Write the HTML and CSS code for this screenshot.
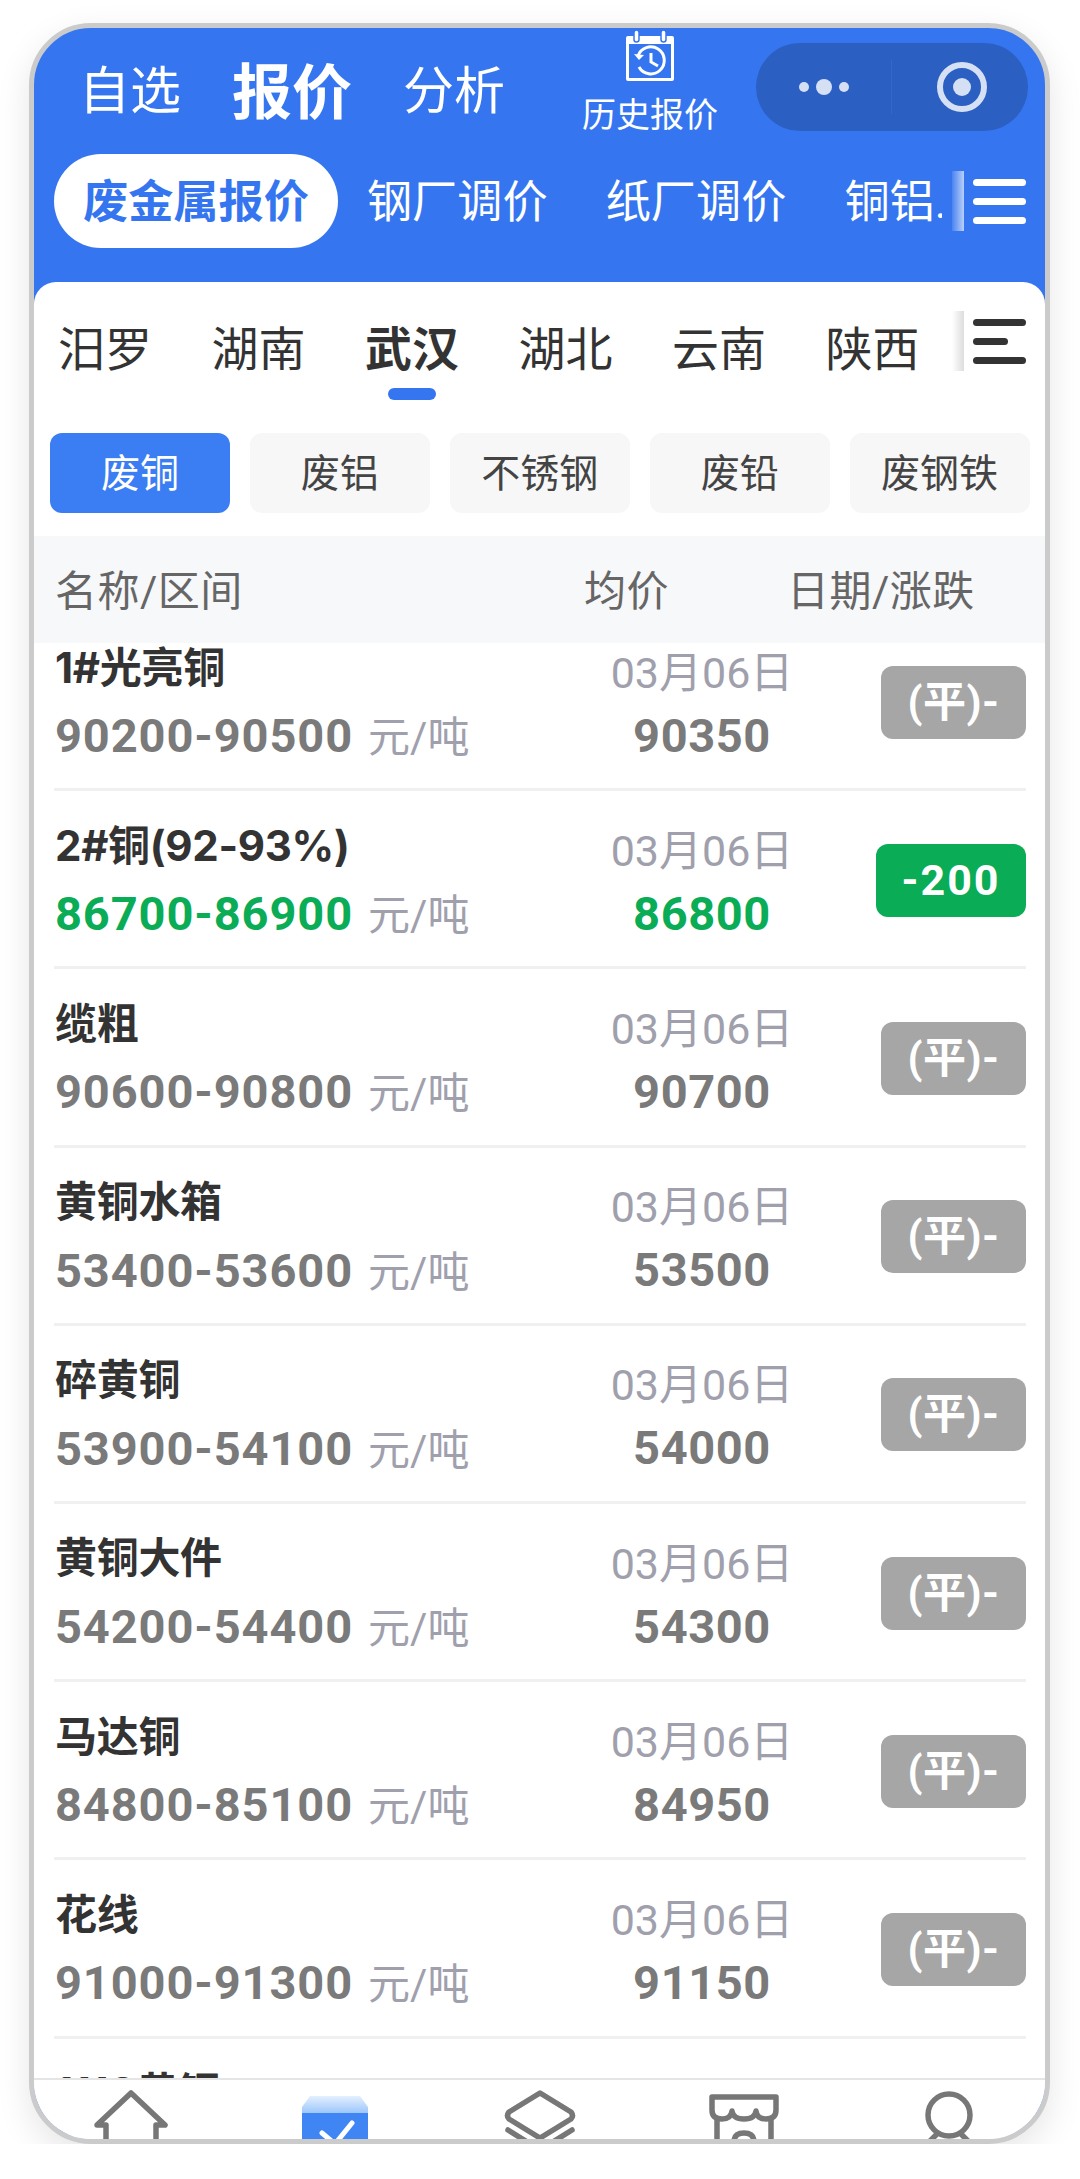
FILE: index.html
```html
<!DOCTYPE html>
<html lang="zh-CN">
<head>
  <meta charset="UTF-8" />
  <meta name="viewport" content="width=device-width, initial-scale=1.0" />
  <title>废金属报价</title>
  <link rel="stylesheet" href="styles.css">
</head>
<body>
  <div class="phone">
    <header class="top">
      <div class="nav">
        <span class="nav-item">自选</span>
        <span class="nav-item nav-active">报价</span>
        <span class="nav-item">分析</span>
        <div class="history">
          <svg class="history-icon" viewBox="0 0 50 52" width="50" height="52">
            <rect x="1" y="6" width="48" height="45" rx="2" fill="#fff"/>
            <rect x="4" y="14" width="42" height="34" fill="#3576f0"/>
            <rect x="9" y="0" width="5" height="12" rx="2.5" fill="#fff" stroke="#3576f0" stroke-width="1.5"/>
            <rect x="36" y="0" width="5" height="12" rx="2.5" fill="#fff" stroke="#3576f0" stroke-width="1.5"/>
            <path d="M13 26a13.5 13.5 0 1 1 1 11" fill="none" stroke="#fff" stroke-width="3"/>
            <path d="M9 24l5 6 5-5" fill="#fff"/>
            <path d="M26 23v9l7 4" fill="none" stroke="#fff" stroke-width="3"/>
          </svg>
          <span class="history-label">历史报价</span>
        </div>
        <div class="capsule">
          <div class="capsule-dots"><i></i><i class="big"></i><i></i></div>
          <div class="capsule-target"><i></i></div>
        </div>
      </div>
      <div class="tabs">
        <div class="tabs-scroll">
          <span class="tab tab-active">废金属报价</span>
          <span class="tab">钢厂调价</span>
          <span class="tab">纸厂调价</span>
          <span class="tab">铜铝...</span>
        </div>
        <span class="fade fade-blue"></span>
        <div class="burger burger-white"><i></i><i></i><i></i></div>
      </div>
    </header>

    <main class="sheet">
      <div class="cities">
        <div class="cities-list">
          <span class="city">汨罗</span>
          <span class="city">湖南</span>
          <span class="city city-active">武汉</span>
          <span class="city">湖北</span>
          <span class="city">云南</span>
          <span class="city">陕西</span>
        </div>
        <span class="fade fade-grey"></span>
        <div class="burger burger-dark"><i></i><i class="short"></i><i></i></div>
      </div>

      <div class="chips">
        <span class="chip chip-active">废铜</span>
        <span class="chip">废铝</span>
        <span class="chip">不锈钢</span>
        <span class="chip">废铅</span>
        <span class="chip">废钢铁</span>
      </div>

      <div class="thead">
        <span class="th-name">名称/区间</span>
        <span class="th-avg">均价</span>
        <span>日期/涨跌</span>
      </div>

      <div class="list">
        <div class="rows">
          <div class="row">
            <div class="info"><div class="name">1#光亮铜</div><div class="range"><b>90200-90500</b> <span class="unit">元/吨</span></div></div>
            <div class="mid"><div class="date">03月06日</div><b class="avg">90350</b></div>
            <div class="change"><span class="badge">(平)-</span></div>
          </div>
          <div class="row down">
            <div class="info"><div class="name">2#铜(92-93%)</div><div class="range"><b>86700-86900</b> <span class="unit">元/吨</span></div></div>
            <div class="mid"><div class="date">03月06日</div><b class="avg">86800</b></div>
            <div class="change"><span class="badge">-200</span></div>
          </div>
          <div class="row">
            <div class="info"><div class="name">缆粗</div><div class="range"><b>90600-90800</b> <span class="unit">元/吨</span></div></div>
            <div class="mid"><div class="date">03月06日</div><b class="avg">90700</b></div>
            <div class="change"><span class="badge">(平)-</span></div>
          </div>
          <div class="row">
            <div class="info"><div class="name">黄铜水箱</div><div class="range"><b>53400-53600</b> <span class="unit">元/吨</span></div></div>
            <div class="mid"><div class="date">03月06日</div><b class="avg">53500</b></div>
            <div class="change"><span class="badge">(平)-</span></div>
          </div>
          <div class="row">
            <div class="info"><div class="name">碎黄铜</div><div class="range"><b>53900-54100</b> <span class="unit">元/吨</span></div></div>
            <div class="mid"><div class="date">03月06日</div><b class="avg">54000</b></div>
            <div class="change"><span class="badge">(平)-</span></div>
          </div>
          <div class="row">
            <div class="info"><div class="name">黄铜大件</div><div class="range"><b>54200-54400</b> <span class="unit">元/吨</span></div></div>
            <div class="mid"><div class="date">03月06日</div><b class="avg">54300</b></div>
            <div class="change"><span class="badge">(平)-</span></div>
          </div>
          <div class="row">
            <div class="info"><div class="name">马达铜</div><div class="range"><b>84800-85100</b> <span class="unit">元/吨</span></div></div>
            <div class="mid"><div class="date">03月06日</div><b class="avg">84950</b></div>
            <div class="change"><span class="badge">(平)-</span></div>
          </div>
          <div class="row">
            <div class="info"><div class="name">花线</div><div class="range"><b>91000-91300</b> <span class="unit">元/吨</span></div></div>
            <div class="mid"><div class="date">03月06日</div><b class="avg">91150</b></div>
            <div class="change"><span class="badge">(平)-</span></div>
          </div>
          <div class="row">
            <div class="info"><div class="name">1110黄铜</div></div>
          </div>
        </div>
      </div>

      <nav class="tabbar">
        <div class="tabbar-item">
          <svg viewBox="0 0 80 70" width="80" height="70" fill="none" stroke="#777" stroke-width="5.5" stroke-linejoin="round" stroke-linecap="round">
            <path d="M15 70V35H6L40 3L74 35H65V70"/>
          </svg>
        </div>
        <div class="tabbar-item">
          <svg viewBox="0 0 80 70" width="80" height="70">
            <defs>
              <linearGradient id="boxLid" x1="0" y1="0" x2="0" y2="1">
                <stop offset="0" stop-color="#e3f0fe"/>
                <stop offset="1" stop-color="#9cc6fb"/>
              </linearGradient>
            </defs>
            <path d="M15 6H65L73 17V23H7V17Z" fill="url(#boxLid)"/>
            <rect x="7" y="23" width="66" height="47" fill="#3f86f4"/>
            <path d="M27 43L40 54L57 33" fill="none" stroke="#fff" stroke-width="5" stroke-linecap="round"/>
          </svg>
        </div>
        <div class="tabbar-item">
          <svg viewBox="0 0 80 70" width="80" height="70" fill="none" stroke="#777" stroke-width="5.5" stroke-linejoin="round" stroke-linecap="round">
            <path d="M40 3L71 22Q74 26 71 29L40 48L9 29Q6 26 9 22Z"/>
            <path d="M8 40L40 60L72 40"/>
          </svg>
        </div>
        <div class="tabbar-item">
          <svg viewBox="0 0 80 70" width="80" height="70" fill="none" stroke="#777" stroke-width="5.5" stroke-linejoin="round">
            <path d="M8 7H72V20Q72 29 62 29Q53 29 52 21Q51 29 40 29Q29 29 28 21Q27 29 18 29Q8 29 8 20Z"/>
            <path d="M13 29V70M67 29V70"/>
            <path d="M30 52Q30 43 40 43Q50 43 50 52V70H30Z"/>
          </svg>
        </div>
        <div class="tabbar-item">
          <svg viewBox="0 0 80 70" width="80" height="70" fill="none" stroke="#777" stroke-width="5.5" stroke-linejoin="round">
            <circle cx="40" cy="25" r="21"/>
            <path d="M29 43L10 62M51 43L70 62"/>
          </svg>
        </div>
      </nav>
    </main>
  </div>
</body>
</html>
```

FILE: styles.css
```css
* {
  box-sizing: border-box;
}

body {
  margin: 0;
  background-color: #ffffff;
  font-family: Roboto, "Noto Sans CJK SC", sans-serif;
  color: #333333;
}

.phone {
  display: flex;
  flex-direction: column;
  width: 1021px;
  height: 2121px;
  margin: 23px 0 0 29px;
  border: 5px solid #cbcbcb;
  border-radius: 62px;
  overflow: hidden;
  background-color: #3576f0;
  box-shadow: 0 12px 34px rgba(0, 0, 0, 0.1);
}

/* blue header */
.top {
  flex: none;
  height: 254px;
}

.nav {
  display: flex;
  align-items: center;
  height: 118px;
  padding-left: 45px;
  color: #ffffff;
}

.nav-item {
  font-size: 51px;
  margin-right: 51px;
  white-space: nowrap;
}

.nav-active {
  font-size: 60px;
  font-weight: bold;
}

.history {
  display: flex;
  flex-direction: column;
  align-items: center;
  flex: none;
  width: 136px;
  margin: 0 0 6px 26px;
}

.history-icon {
  display: block;
  margin-bottom: 9px;
}

.history-label {
  font-size: 34px;
  line-height: 48px;
  white-space: nowrap;
}

.capsule {
  display: flex;
  align-items: center;
  flex: none;
  width: 272px;
  height: 88px;
  margin-left: 38px;
  border-radius: 44px;
  background-color: #2c5fc2;
}

.capsule-dots {
  display: flex;
  align-items: center;
  justify-content: center;
  gap: 7px;
  width: 136px;
  height: 54px;
  border-right: 1px solid #3668c9;
}

.capsule-dots i {
  width: 10px;
  height: 10px;
  border-radius: 50%;
  background-color: #d5e0f5;
}

.capsule-dots i.big {
  width: 16px;
  height: 16px;
}

.capsule-target {
  display: flex;
  align-items: center;
  justify-content: center;
  width: 50px;
  height: 50px;
  margin-left: 45px;
  border: 6px solid #d5e0f5;
  border-radius: 50%;
}

.capsule-target i {
  width: 18px;
  height: 18px;
  border-radius: 50%;
  background-color: #d5e0f5;
}

.tabs {
  display: flex;
  align-items: center;
  height: 94px;
  margin-top: 8px;
  padding-left: 20px;
  color: #ffffff;
}

.tabs-scroll {
  display: flex;
  align-items: center;
  width: 888px;
  height: 94px;
  overflow: hidden;
}

.tab {
  flex: none;
  height: 94px;
  padding: 0 29px;
  font-size: 45.2px;
  line-height: 97px;
  white-space: nowrap;
}

.tab-active {
  border-radius: 47px;
  background-color: #ffffff;
  color: #3576f0;
  font-weight: bold;
}

.fade {
  flex: none;
  width: 12px;
  height: 60px;
  margin-left: 10px;
}

.fade-blue {
  background: linear-gradient(to right, rgba(255, 255, 255, 0.1), rgba(255, 255, 255, 0.65));
}

.fade-grey {
  background: linear-gradient(to right, rgba(200, 200, 200, 0), #dddddd);
}

.burger {
  display: flex;
  flex-direction: column;
  gap: 12px;
  width: 53px;
  margin-left: 9px;
}

.burger i {
  display: block;
  height: 7px;
  border-radius: 4px;
}

.burger-white i {
  background-color: #ffffff;
}

.burger-dark i {
  background-color: #333333;
}

.burger-dark i.short {
  width: 35px;
}

/* white sheet */
.sheet {
  flex: 1;
  display: flex;
  flex-direction: column;
  min-height: 0;
  border-radius: 22px 22px 0 0;
  background-color: #ffffff;
}

.cities {
  flex: none;
  display: flex;
  align-items: flex-start;
  height: 151px;
  padding: 29px 0 0 24px;
}

.cities-list {
  display: flex;
  gap: 59.5px;
  width: 884px;
}

.city {
  display: flex;
  flex-direction: column;
  align-items: center;
  flex: none;
  width: 94px;
  padding-top: 9px;
  font-size: 47px;
  line-height: 60px;
  color: #333333;
  white-space: nowrap;
}

.city-active {
  font-weight: bold;
}

.city-active::after {
  content: "";
  width: 48px;
  height: 12px;
  margin-top: 8px;
  border-radius: 6px;
  background-color: #3576f0;
}

.cities .burger {
  margin-top: 8px;
}

.chips {
  flex: none;
  display: flex;
  gap: 20px;
  height: 80px;
  padding: 0 15.5px 0 16px;
}

.chip {
  flex: 1;
  height: 80px;
  border-radius: 12px;
  background-color: #f7f7f7;
  font-size: 39px;
  line-height: 82px;
  text-align: center;
  color: #444444;
}

.chip-active {
  background-color: #3b7df2;
  color: #ffffff;
}

.thead {
  flex: none;
  display: flex;
  align-items: center;
  height: 107px;
  margin-top: 23px;
  padding: 0 0 5px 21px;
  background-color: #f7f8fa;
  font-size: 42px;
  letter-spacing: 0.5px;
  color: #666666;
}

.th-name {
  width: 529px;
}

.th-avg {
  width: 203px;
}

.list {
  flex: 1;
  min-height: 0;
  overflow: hidden;
}

.rows {
  margin: -30px 19px 0 20px;
}

.row {
  display: grid;
  grid-template-columns: 548px 200px 1fr;
  align-items: center;
  height: 178.2px;
  border-bottom: 3px solid #f0f0f0;
}

.info {
  align-self: start;
  padding: 24.5px 0 0 1px;
}

.name {
  font-family: Inter, "Noto Sans CJK SC", sans-serif;
  font-size: 42px;
  font-weight: bold;
  letter-spacing: -0.3px;
  line-height: 60px;
  white-space: nowrap;
  color: #333333;
}

.range {
  margin-top: 8.5px;
  line-height: 60px;
  white-space: nowrap;
}

.range b {
  font-size: 47px;
  letter-spacing: 0.9px;
  color: #7a7a7a;
}

.unit {
  margin-left: 11px;
  font-size: 42px;
  color: #a0a0ad;
}

.mid {
  padding-top: 7px;
  text-align: center;
}

.date {
  font-size: 43px;
  line-height: 60px;
  color: #a0a0ad;
}

.avg {
  display: block;
  margin-top: 3px;
  font-size: 47px;
  line-height: 60px;
  letter-spacing: 0.6px;
  color: #7a7a7a;
}

.change {
  display: flex;
  justify-content: flex-end;
  padding-top: 3px;
}

.badge {
  min-width: 145px;
  height: 73px;
  padding: 0 26px;
  border-radius: 12px;
  background-color: #a6a6a6;
  font-size: 43px;
  font-weight: bold;
  line-height: 73px;
  letter-spacing: 0.5px;
  text-align: center;
  color: #ffffff;
  white-space: nowrap;
}

.down .range b,
.down .avg {
  color: #0aac56;
}

.down .badge {
  min-width: 150px;
  padding: 0;
  background-color: #0aac56;
  letter-spacing: 2px;
}

.tabbar {
  flex: none;
  display: flex;
  justify-content: center;
  height: 61px;
  overflow: hidden;
  border-top: 2px solid #e5e5e5;
  background-color: #ffffff;
}

.tabbar-item {
  flex: none;
  display: flex;
  justify-content: center;
  width: 204.5px;
  padding-top: 10px;
}
```
